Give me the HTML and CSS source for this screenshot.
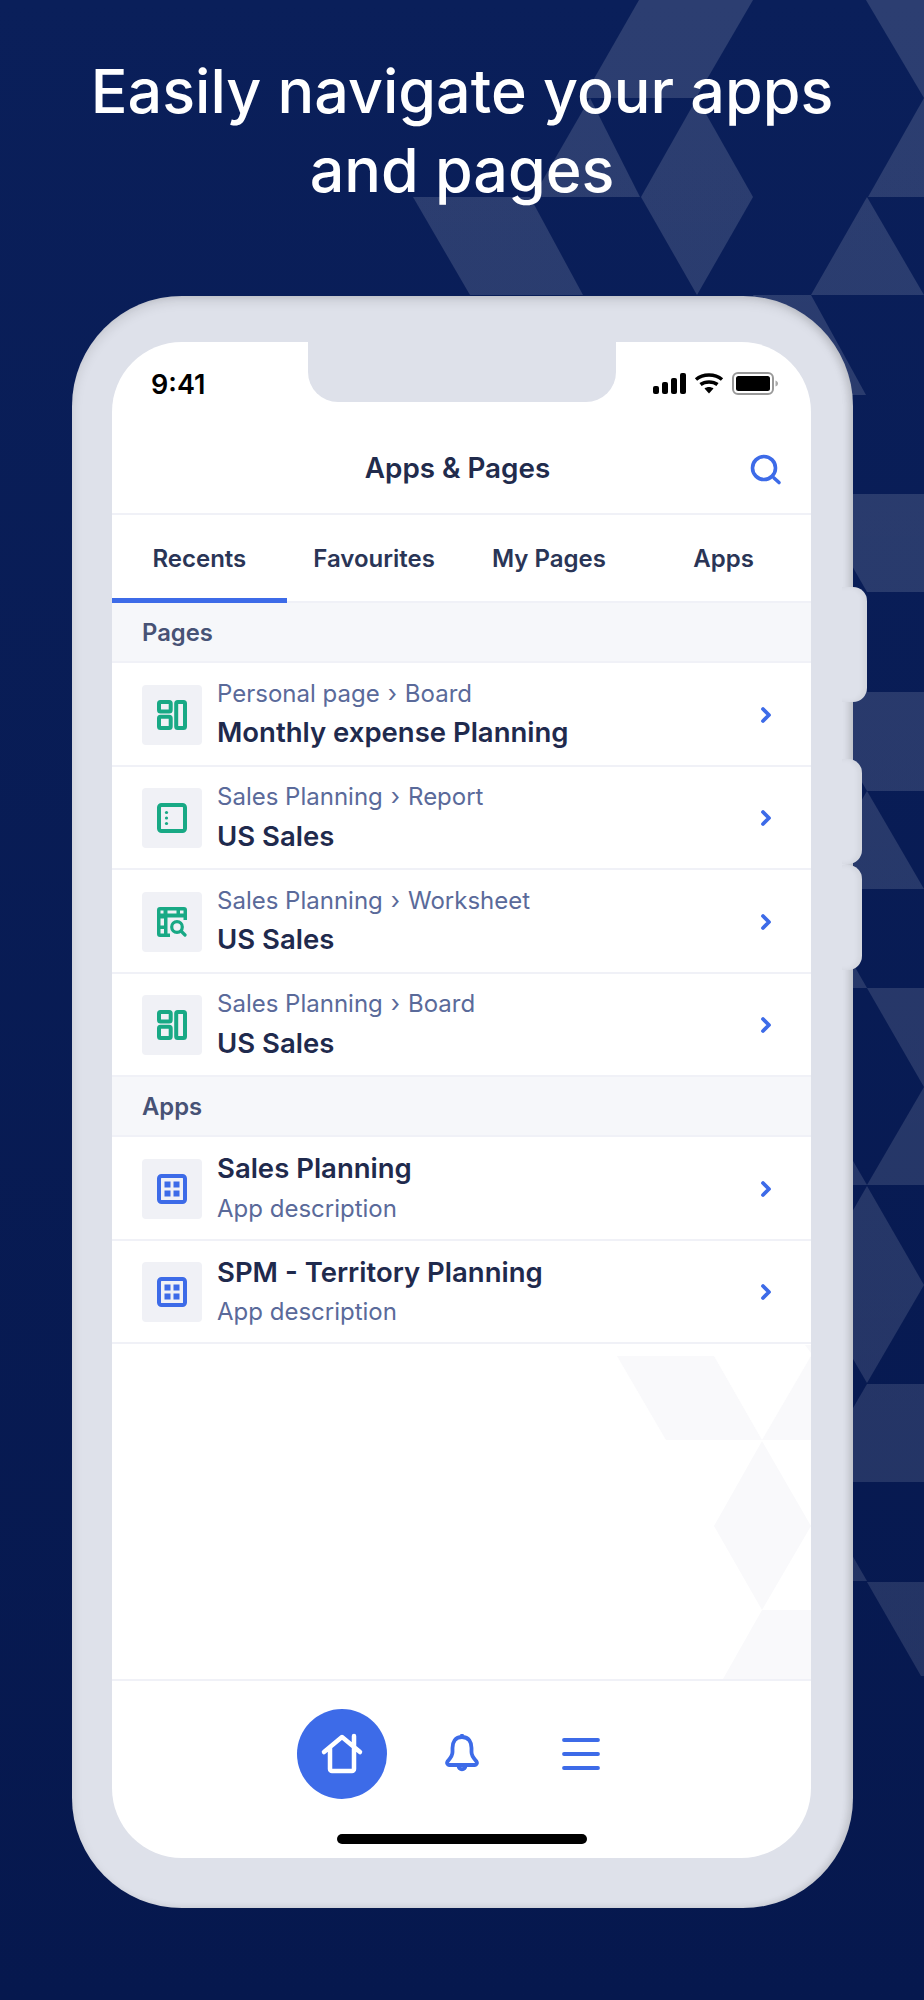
FILE: index.html
```html
<!DOCTYPE html>
<html>
<head>
    <title>Apps and Pages</title>
    <link rel="stylesheet" href="styles.css">
</head>
<body>
    <!-- background triangles -->
    <svg class="bg-pattern" viewBox="0 0 924 2000">
        <defs>
            <linearGradient id="patternFade" gradientUnits="userSpaceOnUse" x1="0" y1="0" x2="0" y2="1700">
                <stop class="fade-top" offset="0"/>
                <stop class="fade-bottom" offset="1"/>
            </linearGradient>
        </defs>
        <polygon points="639,0 753,0 696,98 583,98"/>
        <polygon points="590,98 640,197 533,197"/>
        <polygon points="697,98 753,197 697,295 641,197"/>
        <polygon points="413,197 530,197 583,295 470,295"/>
        <polygon points="866,0 924,0 924,98"/>
        <polygon points="924,98 924,197 868,197"/>
        <polygon points="867,197 924,295 811,295"/>
        <polygon points="753,295 811,295 866,395 809,395"/>
        <polygon points="811,494 924,494 924,592 867,592"/>
        <polygon points="810,692 924,692 924,791 867,791"/>
        <polygon points="867,791 924,889 810,889"/>
        <polygon points="810,889 867,988 810,988"/>
        <polygon points="867,988 924,988 924,1087"/>
        <polygon points="924,1087 924,1185 867,1185"/>
        <polygon points="810,1087 867,1185 810,1185"/>
        <polygon points="867,1186 924,1285 867,1383 810,1285"/>
        <polygon points="867,1384 924,1384 924,1482 810,1482"/>
        <polygon points="810,1482 867,1581 810,1581"/>
        <polygon points="867,1582 924,1582 924,1676 921,1676"/>
    </svg>

    <h1 class="headline">Easily navigate your apps<br>and pages</h1>

    <div class="phone">
        <span class="side-btn btn-power"></span>
        <span class="side-btn btn-one"></span>
        <span class="side-btn btn-two"></span>

        <div class="screen">
            <div class="notch"></div>

            <!-- faint pattern in the empty part of the list -->
            <svg class="screen-pattern" viewBox="0 0 699 336">
                <polygon points="505,13 602,13 650,97 554,97"/>
                <polygon points="650,97 699,13 699,97"/>
                <polygon points="693,2 699,10 699,2"/>
                <polygon points="650,98 699,183 650,267 602,183"/>
                <polygon points="650,267 699,267 699,336 611,336"/>
            </svg>

            <div class="status-bar">
                <span class="clock">9:41</span>
                <svg class="status-icons" width="126" height="24" viewBox="0 0 126 24">
                    <rect x="0" y="14" width="6" height="8" rx="2"/>
                    <rect x="9" y="10" width="6" height="12" rx="2"/>
                    <rect x="18" y="6" width="6" height="16" rx="2"/>
                    <rect x="27" y="1" width="6" height="21" rx="2"/>
                    <path class="wifi" d="M43 7.5c7-6 19-6 26 0M47.500 12.500c4.500-3.500 12.500-3.500 17 0"/>
                    <path d="M51.500 16.500c2.500-2 6.500-2 9 0l-4.500 5z"/>
                    <rect class="batt-case" x="80" y="1" width="40" height="21" rx="5"/>
                    <rect x="83" y="4" width="34" height="15" rx="2.500"/>
                    <path class="batt-tip" d="M122.500 8.500c1.500.5 2.500 1.500 2.500 3s-1 2.500-2.500 3z"/>
                </svg>
            </div>

            <div class="topbar">
                <span class="topbar-title">Apps &amp; Pages</span>
                <svg class="search-icon" width="32" height="32" viewBox="0 0 32 32">
                    <circle cx="14" cy="14" r="11.500"/>
                    <path d="M24 24l5 4.500"/>
                </svg>
            </div>

            <div class="tabs">
                <div class="tab active">Recents</div>
                <div class="tab">Favourites</div>
                <div class="tab">My Pages</div>
                <div class="tab">Apps</div>
            </div>

            <div class="section-label">Pages</div>

            <div class="row">
                <div class="row-icon">
                    <svg class="green" width="30" height="30" viewBox="0 0 30 30">
                        <rect x="2" y="2" width="11.700" height="9.400" rx="1.500"/>
                        <rect x="2" y="16.800" width="11.700" height="11.200" rx="1.500"/>
                        <rect x="19.200" y="2" width="8.800" height="26" rx="1.500"/>
                    </svg>
                </div>
                <div class="row-text">
                    <div class="row-sub">Personal page<span class="crumb">›</span>Board</div>
                    <div class="row-title">Monthly expense Planning</div>
                </div>
                <svg class="chevron" width="12" height="18" viewBox="0 0 12 18"><path d="M3 3l6 6-6 6"/></svg>
            </div>

            <div class="row">
                <div class="row-icon">
                    <svg class="green" width="30" height="30" viewBox="0 0 30 30">
                        <rect x="2" y="2" width="26" height="26" rx="2.500"/>
                        <circle class="dot" cx="9.500" cy="9.500" r="1.600"/>
                        <circle class="dot" cx="9.500" cy="15" r="1.600"/>
                        <circle class="dot" cx="9.500" cy="20.500" r="1.600"/>
                    </svg>
                </div>
                <div class="row-text">
                    <div class="row-sub">Sales Planning<span class="crumb">›</span>Report</div>
                    <div class="row-title">US Sales</div>
                </div>
                <svg class="chevron" width="12" height="18" viewBox="0 0 12 18"><path d="M3 3l6 6-6 6"/></svg>
            </div>

            <div class="row">
                <div class="row-icon">
                    <svg class="solid" width="30" height="30" viewBox="0 0 30 30">
                        <path d="M3 0h24a3 3 0 0 1 3 3v10h-3.500v-2.500H10.500V26.500H13V30H3a3 3 0 0 1-3-3V3a3 3 0 0 1 3-3z"/>
                        <path class="hole" d="M3.500 3.500h3v3h-3zM10.500 3.500h9v3h-9zM23 3.500h3.500v3H23zM3.500 11.500h3.500v7H3.500zM3.500 22h3.500v4.500H3.500z"/>
                        <circle class="lens" cx="20" cy="20" r="5.300"/>
                        <path class="lens" d="M24.500 24.500l3.500 3.500"/>
                    </svg>
                </div>
                <div class="row-text">
                    <div class="row-sub">Sales Planning<span class="crumb">›</span>Worksheet</div>
                    <div class="row-title">US Sales</div>
                </div>
                <svg class="chevron" width="12" height="18" viewBox="0 0 12 18"><path d="M3 3l6 6-6 6"/></svg>
            </div>

            <div class="row">
                <div class="row-icon">
                    <svg class="green" width="30" height="30" viewBox="0 0 30 30">
                        <rect x="2" y="2" width="11.700" height="9.400" rx="1.500"/>
                        <rect x="2" y="16.800" width="11.700" height="11.200" rx="1.500"/>
                        <rect x="19.200" y="2" width="8.800" height="26" rx="1.500"/>
                    </svg>
                </div>
                <div class="row-text">
                    <div class="row-sub">Sales Planning<span class="crumb">›</span>Board</div>
                    <div class="row-title">US Sales</div>
                </div>
                <svg class="chevron" width="12" height="18" viewBox="0 0 12 18"><path d="M3 3l6 6-6 6"/></svg>
            </div>

            <div class="section-label">Apps</div>

            <div class="row">
                <div class="row-icon">
                    <svg class="blue" width="30" height="30" viewBox="0 0 30 30">
                        <rect x="2" y="2" width="26" height="26" rx="2.500"/>
                        <rect class="square" x="7.500" y="7.500" width="6" height="6"/>
                        <rect class="square" x="16.500" y="7.500" width="6" height="6"/>
                        <rect class="square" x="7.500" y="16.500" width="6" height="6"/>
                        <rect class="square" x="16.500" y="16.500" width="6" height="6"/>
                    </svg>
                </div>
                <div class="row-text app">
                    <div class="row-title">Sales Planning</div>
                    <div class="row-sub">App description</div>
                </div>
                <svg class="chevron" width="12" height="18" viewBox="0 0 12 18"><path d="M3 3l6 6-6 6"/></svg>
            </div>

            <div class="row">
                <div class="row-icon">
                    <svg class="blue" width="30" height="30" viewBox="0 0 30 30">
                        <rect x="2" y="2" width="26" height="26" rx="2.500"/>
                        <rect class="square" x="7.500" y="7.500" width="6" height="6"/>
                        <rect class="square" x="16.500" y="7.500" width="6" height="6"/>
                        <rect class="square" x="7.500" y="16.500" width="6" height="6"/>
                        <rect class="square" x="16.500" y="16.500" width="6" height="6"/>
                    </svg>
                </div>
                <div class="row-text app">
                    <div class="row-title">SPM - Territory Planning</div>
                    <div class="row-sub">App description</div>
                </div>
                <svg class="chevron" width="12" height="18" viewBox="0 0 12 18"><path d="M3 3l6 6-6 6"/></svg>
            </div>

            <div class="spacer"></div>

            <div class="bottom-nav">
                <div class="nav-item home">
                    <svg width="90" height="90" viewBox="0 0 90 90">
                        <path d="M27 43l18-15 18 15M33 38v22a2 2 0 0 0 2 2h20a2 2 0 0 0 2-2V38M57 27v11"/>
                    </svg>
                </div>
                <div class="nav-item">
                    <svg width="40" height="40" viewBox="0 0 40 40">
                        <path d="M20 3c-7 0-9.500 5.500-9.500 11v4c0 4.500-3.500 7.500-5 9.500-1 1.500 0 3.500 1.500 3.500h26c1.500 0 2.500-2 1.500-3.500-1.500-2-5-5-5-9.500v-4C29.500 8.500 27 3 20 3zM16.500 31.500c0 5 7 5 7 0M20 1.500V3"/>
                    </svg>
                </div>
                <div class="nav-item">
                    <svg width="40" height="40" viewBox="0 0 40 40">
                        <path d="M2 6h34M2 20h34M2 34h34"/>
                    </svg>
                </div>
            </div>

            <div class="home-indicator"></div>
        </div>
    </div>
</body>
</html>
```

FILE: styles.css
```css
* {
    box-sizing: border-box;
}
html, body {
    margin: 0;
    padding: 0;
}
body {
    position: relative;
    width: 924px;
    height: 2000px;
    overflow: hidden;
    font-family: "Inter", "Lato", sans-serif;
    background: linear-gradient(180deg, #0a1f5a 0%, #06184e 100%);
}
.bg-pattern {
    position: absolute;
    top: 0;
    left: 0;
    width: 924px;
    height: 2000px;
}
.bg-pattern polygon {
    fill: url(#patternFade);
}
.fade-top {
    stop-color: #fff;
    stop-opacity: 0.14;
}
.fade-bottom {
    stop-color: #fff;
    stop-opacity: 0.115;
}
.headline {
    position: relative;
    margin: 0;
    padding-top: 52px;
    height: 296px;
    font-size: 61px;
    line-height: 79px;
    font-weight: 500;
    color: #fff;
    text-align: center;
}
.phone {
    position: relative;
    width: 781px;
    height: 1612px;
    margin-left: 72px;
    padding: 46px 42px 50px 40px;
    background: #dee1ea;
    border-radius: 110px;
    box-shadow: inset 0 5px 12px rgba(0, 0, 0, 0.1), inset -4px 0 7px rgba(0, 0, 0, 0.1);
}
.side-btn {
    position: absolute;
    left: 770px;
    background: #dee1ea;
    border-radius: 0 14px 14px 0;
    box-shadow: inset -4px 0 5px rgba(0, 0, 0, 0.05);
}
.btn-power {
    top: 291px;
    width: 25px;
    height: 115px;
}
.btn-one {
    top: 463px;
    width: 20px;
    height: 105px;
}
.btn-two {
    top: 569px;
    width: 20px;
    height: 105px;
}
.screen {
    position: relative;
    display: flex;
    flex-direction: column;
    height: 100%;
    background: #fff;
    border-radius: 70px;
    overflow: hidden;
}
.notch {
    position: absolute;
    top: 0;
    left: 196px;
    width: 308px;
    height: 60px;
    background: #dee1ea;
    border-radius: 0 0 30px 30px;
}
.screen-pattern {
    position: absolute;
    left: 0;
    top: 1001px;
    width: 699px;
    height: 336px;
}
.screen-pattern polygon {
    fill: #f9f9fb;
}
.status-bar {
    display: flex;
    justify-content: space-between;
    align-items: center;
    height: 84px;
    padding: 0 32px 0 39px;
}
.clock {
    font-size: 27px;
    font-weight: 600;
    color: #000;
}
.status-icons rect,
.status-icons path {
    fill: #000;
}
.status-icons .wifi {
    fill: none;
    stroke: #000;
    stroke-width: 3.500px;
}
.status-icons .batt-case {
    fill: none;
    stroke: #999;
    stroke-width: 2px;
}
.status-icons .batt-tip {
    fill: #aaa;
}
.topbar {
    position: relative;
    display: flex;
    justify-content: center;
    align-items: center;
    height: 89px;
    border-bottom: 2px solid #f0f1f7;
    padding: 0 8px 4px 0;
}
.topbar-title {
    font-size: 27.800px;
    font-weight: 600;
    color: #212b4c;
}
.search-icon {
    position: absolute;
    right: 29px;
    top: 28px;
    fill: none;
    stroke: #3d6be8;
    stroke-width: 3.600px;
    stroke-linecap: round;
}
.tabs {
    display: flex;
    height: 88px;
    border-bottom: 2px solid #f0f1f7;
}
.tab {
    flex: 1;
    display: flex;
    justify-content: center;
    align-items: center;
    height: 88px;
    padding-top: 3px;
    font-size: 24px;
    font-weight: 600;
    color: #2a3556;
    border-bottom: 5px solid transparent;
}
.tab.active {
    border-bottom-color: #3d6be8;
}
.section-label {
    position: relative;
    display: flex;
    align-items: center;
    height: 60px;
    padding-left: 30px;
    font-size: 23.800px;
    font-weight: 600;
    color: #475275;
    background: #f6f7fa;
    border-bottom: 2px solid #f0f1f7;
}
.row {
    position: relative;
    display: flex;
    align-items: center;
    height: 103.500px;
    padding: 2px 39px 0 30px;
    background: #fff;
    border-bottom: 2px solid #f0f1f7;
}
.row-icon {
    display: flex;
    justify-content: center;
    align-items: center;
    flex: none;
    width: 60px;
    height: 60px;
    margin-right: 15px;
    background: #f0f1f6;
    border-radius: 4px;
}
.row-icon svg {
    fill: none;
    stroke-width: 4px;
    stroke-linecap: round;
}
.row-icon .green {
    stroke: #18a985;
}
.row-icon .blue {
    stroke: #3d6be8;
}
.row-icon .solid {
    fill: #18a985;
}
.row-icon .hole {
    fill: #f0f1f6;
}
.row-icon .lens {
    fill: none;
    stroke: #18a985;
    stroke-width: 3.200px;
}
.row-icon .dot {
    fill: #18a985;
    stroke: none;
}
.row-icon .square {
    fill: #3d6be8;
    stroke: none;
}
.row-text {
    flex: 1;
    line-height: 39.500px;
    padding-bottom: 3px;
}
.row-text.app {
    padding-bottom: 0;
}
.row-sub {
    font-size: 24px;
    color: #5a6a9a;
}
.crumb {
    margin: 0 8px;
}
.row-title {
    font-size: 27.500px;
    font-weight: 600;
    color: #1f2a4d;
}
.chevron {
    fill: none;
    stroke: #3d6be8;
    stroke-width: 3.800px;
    stroke-linecap: round;
    stroke-linejoin: round;
}
.spacer {
    flex: 1;
}
.bottom-nav {
    position: relative;
    display: flex;
    justify-content: center;
    gap: 30px;
    flex: none;
    padding-top: 28px;
    background: transparent;
    border-top: 2px solid #f0f1f7;
}
.nav-item {
    display: flex;
    justify-content: center;
    align-items: center;
    width: 90px;
    height: 90px;
}
.nav-item svg {
    fill: none;
    stroke: #3d6be8;
    stroke-width: 3.800px;
    stroke-linecap: round;
    stroke-linejoin: round;
}
.nav-item.home {
    background: #3d6be8;
    border-radius: 50%;
}
.nav-item.home svg {
    stroke: #fff;
    stroke-width: 4.500px;
}
.home-indicator {
    flex: none;
    width: 250px;
    height: 10px;
    margin: 35px auto 14px;
    background: #000;
    border-radius: 5px;
}
```
